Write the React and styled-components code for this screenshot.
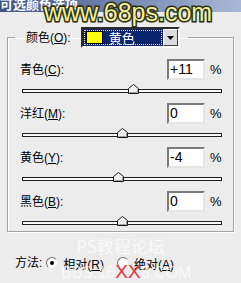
import React from "react";
import styled, { createGlobalStyle } from "styled-components";

const Global = createGlobalStyle`
  html, body { margin: 0; padding: 0; background: #ececec; }
  #root {
    width: 241px;
    height: 283px;
    overflow: hidden;
    position: relative;
    font-family: "Liberation Sans", "Noto Sans CJK SC", sans-serif;
    font-size: 12px;
    color: #000;
  }
`;

const TitleBar = styled.div`
  height: 12px;
  overflow: hidden;
  background: linear-gradient(to right, #3f5385, #7e91b8 60%, #a9b8d4);
  color: #fff;
  font-family: "Noto Sans CJK SC", sans-serif;
  font-weight: bold;
  font-size: 13px;
  line-height: 12px;
  white-space: nowrap;
  span { display: block; margin-top: -2px; }
`;

const Body = styled.div`
  padding: 15px 7px 0 7px;
`;

const Group = styled.fieldset`
  margin: 0;
  padding: 0 0 6px 0;
  border: 1px solid #a3a3a3;
  box-shadow: inset 1px 1px 0 #fff, 1px 1px 0 #fff;
  min-width: 0;
`;

const Legend = styled.legend`
  margin-left: 7px;
  padding: 0 8px 0 11px;
  display: flex;
  align-items: center;
  gap: 10px;
  height: 21px;
`;

const Label = styled.span`
  white-space: nowrap;
  line-height: 14px;
  u { text-decoration: underline; text-underline-offset: 1px; }
`;

const Combo = styled.div`
  width: 99px;
  height: 21px;
  box-sizing: border-box;
  border: 2px inset #ddd;
  border-color: #808080 #fff #fff #808080;
  background: #fff;
  display: flex;
`;

const ComboValue = styled.div`
  flex: 1;
  background: #0c246c;
  outline: 1px dotted #e6e6a0;
  outline-offset: -2px;
  display: flex;
  align-items: center;
  gap: 6px;
  padding-left: 3px;
  color: #fff;
  font-size: 13px;
`;

const Swatch = styled.span`
  width: 15px;
  height: 11px;
  background: ${(p) => p.color};
  border: 1px solid #000;
`;

const ComboButton = styled.div`
  width: 15px;
  box-sizing: border-box;
  background: #dcdcdc;
  border: 1px solid;
  border-color: #fff #404040 #404040 #fff;
  display: flex;
  align-items: center;
  justify-content: center;
`;

const Channel = styled.div`
  margin-top: ${(p) => (p.first ? 11 : 10)}px;
`;

const Row = styled.div`
  display: grid;
  grid-template-columns: 1fr 38px 28px;
  align-items: center;
  height: 21px;
  padding-left: 12px;
`;

const Field = styled.div`
  height: 21px;
  box-sizing: border-box;
  border: 2px solid;
  border-color: #7a7a7a #e4e4e4 #e4e4e4 #7a7a7a;
  background: #fff;
  font-size: 14px;
  line-height: 17px;
  padding-left: 1px;
`;

const Percent = styled.span`
  padding-left: 5px;
  font-size: 13px;
`;

const SliderWrap = styled.div`
  padding: 9px 0 0 14px;
`;

const Track = styled.div`
  position: relative;
  width: 198px;
  height: 2px;
  border: 1px solid #202020;
  background: #fafafa;
`;

const Thumb = styled.svg`
  position: absolute;
  top: -6px;
`;

const Method = styled.div`
  display: flex;
  align-items: center;
  height: 16px;
  margin-top: 23px;
  padding-left: 15px;
`;

const Radio = styled.label`
  display: flex;
  align-items: center;
  gap: 5px;
  margin-left: ${(p) => p.gap}px;
  u { text-decoration: underline; text-underline-offset: 1px; }
`;

const RadioDot = styled.span`
  width: 12px;
  height: 12px;
  box-sizing: border-box;
  border-radius: 50%;
  border: 1px solid;
  border-color: #707070 #e8e8e8 #e8e8e8 #707070;
  background: #fff;
  display: flex;
  align-items: center;
  justify-content: center;
  &::after {
    content: "";
    width: 4px;
    height: 4px;
    border-radius: 50%;
    background: ${(p) => (p.checked ? "#000" : "transparent")};
  }
`;

const SiteMark = styled.div`
  position: absolute;
  left: 44px;
  top: -2px;
  font-family: "Liberation Sans", sans-serif;
  font-size: 25px;
  color: #eef0a0;
  -webkit-text-stroke: 3px #2c3010;
  paint-order: stroke fill;
  text-shadow: 0 0 2px #2a2e0c;
  letter-spacing: 0;
`;

const ForumMark = styled.div`
  position: absolute;
  left: 0;
  right: 0;
  top: 236px;
  text-align: center;
  color: rgba(255, 255, 255, 0.75);
  font-family: "Noto Sans CJK SC", sans-serif;
  font-size: 17px;
  line-height: 20px;
`;

const BbsMark = styled.div`
  position: absolute;
  left: 61px;
  top: 263px;
  color: rgba(255, 255, 255, 0.7);
  font-family: "Liberation Sans", sans-serif;
  font-size: 16px;
  line-height: 18px;
  span { color: #e0343c; font-size: 19px; }
`;

const channels = [
  { name: "青色", key: "C", value: "+11", v: 11 },
  { name: "洋红", key: "M", value: "0", v: 0 },
  { name: "黄色", key: "Y", value: "-4", v: -4 },
  { name: "黑色", key: "B", value: "0", v: 0 },
];

const ThumbIcon = ({ v }) => (
  <Thumb width="11" height="10" viewBox="0 0 11 10" style={{ left: 94 + v }}>
    <polygon points="0.5,9.5 0.5,4.5 5.5,0.5 10.5,4.5 10.5,9.5" fill="#f0f0f0" stroke="#1a1a1a" />
    <polyline points="1.5,8.5 9.5,8.5 9.5,5" fill="none" stroke="#9a9a9a" />
  </Thumb>
);

export default function App() {
  return (
    <>
      <Global />
      <TitleBar><span>可选颜色选项</span></TitleBar>
      <Body>
        <Group>
          <Legend>
            <Label>颜色(<u>O</u>):</Label>
            <Combo>
              <ComboValue>
                <Swatch color="#ffff00" />
                黄色
              </ComboValue>
              <ComboButton>
                <svg width="7" height="4" viewBox="0 0 7 4">
                  <polygon points="0,0 7,0 3.5,4" fill="#000" />
                </svg>
              </ComboButton>
            </Combo>
          </Legend>
          {channels.map((c, i) => (
            <Channel key={c.key} first={i === 0}>
              <Row>
                <Label>{c.name}(<u>{c.key}</u>):</Label>
                <Field>{c.value}</Field>
                <Percent>%</Percent>
              </Row>
              <SliderWrap>
                <Track>
                  <ThumbIcon v={c.v} />
                </Track>
              </SliderWrap>
            </Channel>
          ))}
        </Group>
      </Body>
      <Method>
        <Label>方法:</Label>
        <Radio gap={4}>
          <RadioDot checked />
          <span>相对(<u>R</u>)</span>
        </Radio>
        <Radio gap={13}>
          <RadioDot />
          <span>绝对(<u>A</u>)</span>
        </Radio>
      </Method>
      <SiteMark>www.68ps.com</SiteMark>
      <ForumMark>PS教程论坛</ForumMark>
      <BbsMark>BBS.16<span>XX</span>8.COM</BbsMark>
    </>
  );
}
